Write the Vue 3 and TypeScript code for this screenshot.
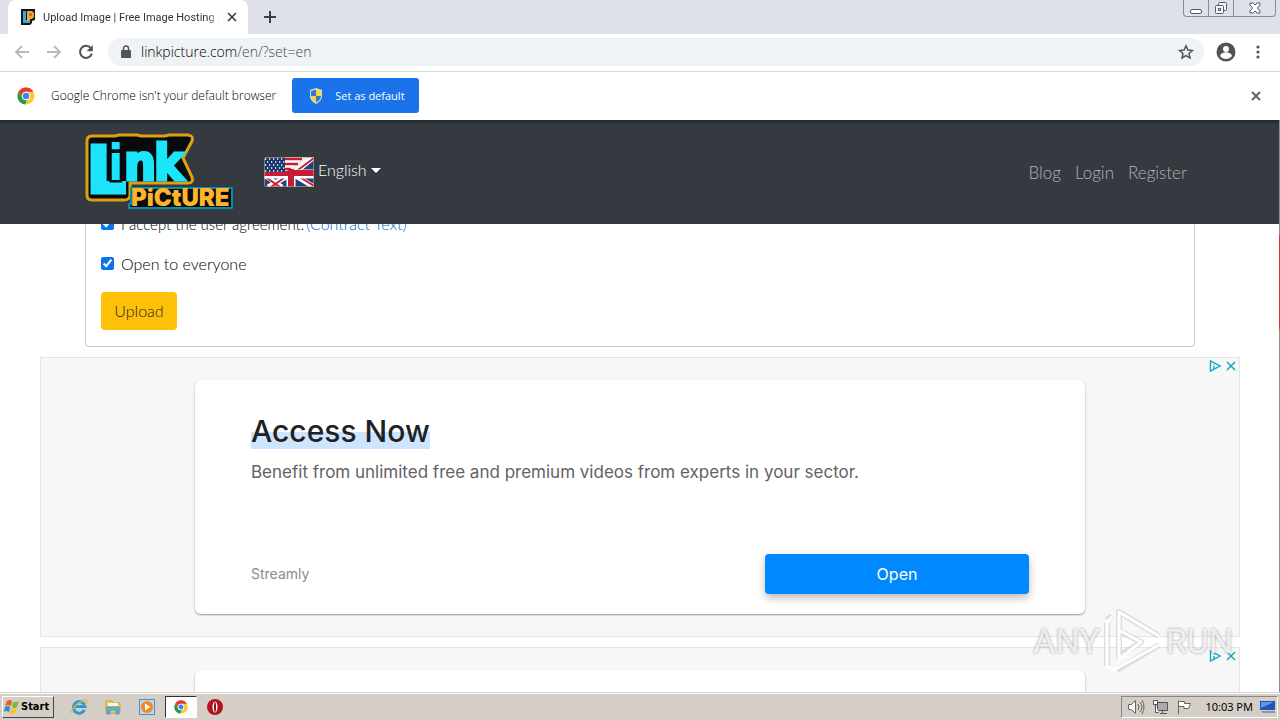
<script setup lang="ts">
import { ref } from 'vue'

interface Ad {
  title: string
  text: string
  brand: string
  action: string
}

const address = ref('linkpicture.com/en/?set=en')
const accepted = ref(true)
const open = ref(true)
const links = ['Blog', 'Login', 'Register']
const ad: Ad = {
  title: 'Access Now',
  text: 'Benefit from unlimited free and premium videos from experts in your sector.',
  brand: 'Streamly',
  action: 'Open',
}
const ads: Ad[] = [ad, ad]
</script>

<template>
  <div class="screen">
    <header class="tabs">
      <div class="tab">
        <svg class="favicon" viewBox="0 0 16 16" width="16" height="16">
          <path d="M1 0h14v11l-3 1v2l-2 2H1z" fill="#151515" />
          <path d="M3 2h3v9h4v3H3z" fill="#35a9e8" />
          <path d="M7 2h5l2 2v4l-2 2h-2v2H7z" fill="#f6a437" />
          <path d="M9.500 4.500h2v2h-2z" fill="#8b4b12" />
        </svg>
        <span class="tab-title">Upload Image | Free Image Hosting |</span>
        <button class="plain" aria-label="Close tab">
          <svg viewBox="0 0 10 10" width="10" height="10"><path d="M1 1l8 8M9 1l-8 8" stroke="#3c4043" stroke-width="1.7" /></svg>
        </button>
      </div>
      <button class="plain new-tab" aria-label="New tab">
        <svg viewBox="0 0 12 12" width="12" height="12"><path d="M6 0v12M0 6h12" stroke="#3c4043" stroke-width="2" /></svg>
      </button>
      <div class="window-buttons">
        <button aria-label="Minimize">
          <svg viewBox="0 0 14 14" width="14" height="14"><rect x="1.500" y="8.500" width="11" height="4" rx="1.500" fill="#fff" stroke="#555a66" /></svg>
        </button>
        <button aria-label="Restore">
          <svg viewBox="0 0 14 14" width="14" height="14" fill="#f4f5f7" stroke="#555a66"><rect x="4.500" y="1.500" width="8" height="8" rx="1" /><rect x="1.500" y="4.500" width="8" height="8" rx="1" /><rect x="4.500" y="7.500" width="2" height="2" /></svg>
        </button>
        <button class="wide" aria-label="Close">
          <svg viewBox="0 0 14 14" width="14" height="14"><path d="M2 2h3l2 2 2-2h3v2L9.500 7 12 10v2H9L7 10l-2 2H2v-2l2.500-3L2 4z" fill="#fff" stroke="#555a66" /></svg>
        </button>
      </div>
    </header>

    <div class="toolbar">
      <button class="plain" aria-label="Back">
        <svg viewBox="0 0 14 14" width="14" height="14" fill="none" stroke="#b6b8bb" stroke-width="1.8"><path d="M14 7H1M7 1L1 7l6 6" /></svg>
      </button>
      <button class="plain" aria-label="Forward">
        <svg viewBox="0 0 14 14" width="14" height="14" fill="none" stroke="#b6b8bb" stroke-width="1.8"><path d="M0 7h13M7 1l6 6-6 6" /></svg>
      </button>
      <button class="plain" aria-label="Reload">
        <svg viewBox="1 1 14 14" width="14" height="14"><path d="M12.800 4.200A6 6 0 1 0 13.800 9.600" fill="none" stroke="#505357" stroke-width="2" /><path d="M14.800 1v6.200H8.600z" fill="#505357" /></svg>
      </button>
      <div class="omnibox">
        <svg viewBox="0 0 10 13" width="10" height="13"><path d="M2.500 6V3.500a2.500 2.500 0 0 1 5 0V6" fill="none" stroke="#505357" stroke-width="1.500" /><rect x="0" y="5" width="10" height="8" rx="1" fill="#505357" /></svg>
        <label class="address">
          <input v-model="address" aria-label="Address" class="address-input" />
          <span class="address-text" aria-hidden="true">linkpicture.com<i>/en/?set=en</i></span>
        </label>
        <button class="plain" aria-label="Bookmark">
          <svg viewBox="0 0 16 16" width="16" height="16"><path d="M8 1.800l1.900 4.200 4.500.5-3.400 3 1 4.500L8 11.700 4 14l1-4.500-3.400-3L6.100 6z" fill="none" stroke="#505357" stroke-width="1.500" /></svg>
        </button>
      </div>
      <button class="plain" aria-label="Profile">
        <svg viewBox="0 0 20 20" width="20" height="20"><circle cx="10" cy="10" r="9.500" fill="#505357" /><circle cx="10" cy="7" r="3" fill="#fff" /><path d="M4 14c1-5 11-5 12 0-3 4-9 4-12 0z" fill="#fff" /></svg>
      </button>
      <button class="plain menu" aria-label="Menu">
        <svg viewBox="0 0 4 14" width="4" height="14" fill="#505357"><circle cx="2" cy="2" r="1.600" /><circle cx="2" cy="7" r="1.600" /><circle cx="2" cy="12" r="1.600" /></svg>
      </button>
    </div>

    <div class="infobar">
      <svg viewBox="0 0 18 18" width="18" height="18"><circle cx="9" cy="9" r="8.500" fill="#fcc934" /><path d="M1.600 4.800A8.500 8.500 0 0 1 16.400 4.800H9A4.200 4.200 0 0 0 5.300 11z" fill="#e33b2e" /><path d="M1.600 4.800L5.400 11.200A4.200 4.200 0 0 0 10 13.100L8 17.500A8.500 8.500 0 0 1 1.600 4.800z" fill="#1e9c4f" /><circle cx="9" cy="9" r="4.200" fill="#fff" /><circle cx="9" cy="9" r="3.200" fill="#3b82ee" /></svg>
      <span class="info-text">Google Chrome isn't your default browser</span>
      <button class="set-default">
        <svg viewBox="0 0 16 16" width="16" height="16"><path d="M8 0l6 2v6c0 4-3 6-6 8-3-2-6-4-6-8V2z" fill="#d7dde5" /><path d="M8 1.500L3 3v5h5z" fill="#2b7bd0" /><path d="M8 1.500L13 3v5H8z" fill="#f8d634" /><path d="M3 8h5v6.500C5 12.500 3 11 3 8z" fill="#f8d634" /><path d="M13 8H8v6.500c3-2 5-3.500 5-6.500z" fill="#2b7bd0" /></svg>
        Set as default
      </button>
      <button class="plain dismiss" aria-label="Dismiss">
        <svg viewBox="0 0 10 10" width="10" height="10"><path d="M1 1l8 8M9 1l-8 8" stroke="#5f6368" stroke-width="2" /></svg>
      </button>
    </div>

    <div class="site">
      <nav class="navbar">
        <div class="container nav-row">
          <a href="#" class="logo" aria-label="Link Picture">
            <svg viewBox="0 0 149 76" width="149" height="76">
              <path d="M7 2H30L34 1H52L56 2H80L84 1H103Q109 2 107 7L98 24L107 43Q109 49 103 49H45V62Q44 66 39 66H7Q2 66 2 61V7Q2 2 7 2z" fill="#080b0d" stroke="#e0a013" stroke-width="3" />
              <path d="M46 54H147V74H44V70H46z" fill="#080b0d" stroke="#078cad" stroke-width="2" stroke-linejoin="round" />
              <g fill="#1ce4fb" stroke="#1ce4fb">
                <text x="4" y="59" class="logo-l" stroke-width="3">L</text>
                <text x="23" y="46" class="logo-ink" stroke="#080b0d" stroke-width="5">i</text>
                <text x="39" y="46" class="logo-ink" stroke-width="3">n</text>
                <text x="69" y="46" class="logo-ink" stroke-width="3">k</text>
              </g>
              <text x="46" y="72" class="logo-picture" fill="#ffb52b">PiCtURE</text>
            </svg>
          </a>
          <button class="language">
            <svg class="flag" viewBox="0 0 50 30" width="50" height="30">
              <rect width="50" height="30" fill="#f3eeee" />
              <path d="M0 17h50v13H0z" fill="#20427e" />
              <path d="M33 12L50 0v30H33z" fill="#203f7e" />
              <path d="M0 18l18 12M50 30L32 19M50 0L28 18M22 20L4 30" stroke="#fff" stroke-width="5" />
              <path d="M0 19l16 11M50 29L34 19M50 1L30 16M20 21L7 30" stroke="#c81f3b" stroke-width="2" />
              <path d="M0 17h50M27 12v18" stroke="#fff" stroke-width="9" />
              <path d="M0 16h50M27 12v18" stroke="#c51c38" stroke-width="6" />
              <path d="M20 0h20L23 14h-3z" fill="#fff" />
              <path d="M20 2h18M20 7h14M20 12h7" stroke="#c51c38" stroke-width="2.500" />
              <rect width="21" height="15" fill="#17346f" />
              <path d="M1 2h20M3 5h18M1 8h20M3 11h18M1 14h20" stroke="#fff" stroke-width="1.300" stroke-dasharray="1.300 2.700" />
              <rect x=".5" y=".5" width="49" height="29" rx="1" fill="none" stroke="#b6a16c" stroke-width=".7" />
            </svg>
            <span class="language-name">English<span class="caret"></span></span>
          </button>
          <div class="nav-links"><a v-for="link in links" :key="link" href="#">{{ link }}</a></div>
        </div>
      </nav>

      <main class="content">
        <form class="container upload" @submit.prevent>
          <div class="check">
            <input id="accept" v-model="accepted" type="checkbox" />
            <label for="accept" class="long">I accept the user agreement.</label><a href="#">(Contract Text)</a>
          </div>
          <div class="check">
            <input id="public" v-model="open" type="checkbox" />
            <label for="public">Open to everyone</label>
          </div>
          <button class="submit">Upload</button>
        </form>

        <section v-for="(item, i) in ads" :key="i" class="ad">
          <div class="ad-marks">
            <svg viewBox="0 0 12 12" width="12" height="12" fill="none" stroke="#16a6bd" stroke-width="1.400"><path d="M1.500 1v10L11 6z" /><path d="M5 4v.8M5 6v3" /></svg>
            <button class="plain" aria-label="Close ad"><svg viewBox="0 0 10 10" width="10" height="10"><path d="M1 1l8 8M9 1l-8 8" stroke="#16a6bd" stroke-width="1.500" /></svg></button>
          </div>
          <article class="ad-card">
            <h2><span>{{ item.title }}</span></h2>
            <p>{{ item.text }}</p>
            <footer><span>{{ item.brand }}</span><button>{{ item.action }}</button></footer>
          </article>
        </section>
      </main>
      <div class="edge"><span></span></div>
      <div class="watermark">
        <span>ANY</span>
        <svg viewBox="0 0 58 64" width="58" height="64" fill="none" stroke-linejoin="round">
          <g stroke="#c4c4c4" stroke-width="6" opacity=".5"><path d="M15 38V3L55 27M3 14V57M8 7L3 11M13 61l42-25M15 50V22l22 11-22 14" /></g>
          <g stroke="#fff" stroke-width="3"><path d="M15 38V3L55 27M3 57V13l5-5M3 57l7 4L55 36M15 50V21L37 33z" /></g>
        </svg>
        <span>RUN</span>
      </div>
    </div>

    <footer class="taskbar">
      <button class="start">
        <svg viewBox="0 0 16 16" width="16" height="16"><path d="M3 2q3-2 5 0L7 7Q4 5 1 7z" fill="#ee5b25" /><path d="M9 3q3 1 6-1l-2 6q-3 2-5 0z" fill="#7eb82b" /><path d="M1 8q3-2 5 0l-1 5q-3-2-5 0z" fill="#2e87d1" /><path d="M7 9q3 1 6 0l-2 5q-3 2-5 0z" fill="#fbc224" /></svg>
        Start
      </button>
      <div class="quick">
        <button aria-label="Internet Explorer"><svg viewBox="0 0 18 18" width="18" height="18" fill="none"><path d="M14.500 12A5.800 5.800 0 1 1 15 8.500H5" stroke="#2c9bdc" stroke-width="3" /><path d="M2 15C-1 12 12 1 16 2c2 1 0 4-1 5" stroke="#e6b52d" stroke-width="1.300" /></svg></button>
        <button aria-label="Explorer"><svg viewBox="0 0 18 18" width="18" height="18"><path d="M2 3h6l1 2h7v10H2z" fill="#edcc67" stroke="#c9a346" /><path d="M4 5h10v3H4z" fill="#fff5cb" /><path d="M3 16V9h12v7h-3v-4H6v4z" fill="#5bb9dc" stroke="#3289b6" stroke-width=".7" /></svg></button>
        <button aria-label="Media Player"><svg viewBox="0 0 18 18" width="18" height="18"><rect x="1.500" y="1.500" width="15" height="15" fill="#b7d8f0" stroke="#508fc5" /><circle cx="9" cy="9" r="6" fill="#f5861b" /><path d="M7 5.500v7L12.500 9z" fill="#fff" /></svg></button>
        <button class="current" aria-label="Chrome"><svg viewBox="0 0 18 18" width="14" height="14"><circle cx="9" cy="9" r="8.500" fill="#fcc934" /><path d="M1.600 4.800A8.500 8.500 0 0 1 16.400 4.800H9A4.200 4.200 0 0 0 5.300 11z" fill="#e33b2e" /><path d="M1.600 4.800L5.400 11.200A4.200 4.200 0 0 0 10 13.100L8 17.500A8.500 8.500 0 0 1 1.600 4.800z" fill="#1e9c4f" /><circle cx="9" cy="9" r="4.200" fill="#fff" /><circle cx="9" cy="9" r="3.200" fill="#3b82ee" /></svg></button>
        <button aria-label="Opera"><svg viewBox="0 0 18 18" width="18" height="18"><circle cx="9" cy="9" r="8" fill="#b5121d" /><ellipse cx="9" cy="9" rx="2.500" ry="5.500" fill="#fff" /><ellipse cx="9" cy="9" rx="1" ry="5" fill="#8c0d16" /></svg></button>
      </div>
      <div class="tray">
        <svg viewBox="0 0 18 16" width="18" height="16" fill="#fff" stroke="#666"><path d="M1.500 5.500h3l4-4v13l-4-4h-3z" /><path d="M11 5q2 3 0 6M13 3q4 5 0 10M15 1q4 7 0 14" fill="none" /></svg>
        <svg viewBox="0 0 17 16" width="17" height="16" fill="#fff" stroke="#555"><path d="M5.500 3.500h10v8h-10z" fill="#aaa" /><path d="M8 14.500h7M10.500 12v2M1.500 1.500h4v4h-4zM3.500 5.500v8h3" /></svg>
        <svg viewBox="0 0 17 16" width="17" height="16" fill="#fff" stroke="#666"><path d="M2.500 15V1.500M2.500 2.500h6v2h6l-2 5H8v-2H2.500" /></svg>
        <time>10:03 PM</time>
        <svg viewBox="0 0 16 14" width="16" height="14"><path d="M0 1h15v9H0z" fill="#1e55b7" /><path d="M1 2h13L1 8z" fill="#5d9ae6" /><path d="M1 11h14v2H3z" fill="#8797ab" /></svg>
      </div>
    </footer>
  </div>
</template>

<style>
body { margin: 0; overflow: hidden; }
</style>

<style scoped>
* { box-sizing: border-box; }
.screen { height: 100vh; display: flex; flex-direction: column; overflow: hidden; background: #fff; font-family: "Noto Sans", sans-serif; color: #212529; }
svg { display: block; flex: none; overflow: visible; }
button { font: inherit; cursor: pointer; }
a { text-decoration: none; }
.plain { border: 0; padding: 0; background: none; display: flex; flex: none; }
.tabs { height: 34px; background: #dee1e8; display: flex; align-items: center; flex: none; }
.tab { align-self: stretch; width: 240px; margin-left: 8px; padding: 0 11px 0 12px; display: flex; align-items: center; background: #fff; border-radius: 8px 8px 0 0; }
.tab-title { flex: 1; min-width: 0; margin: 0 8px 0 7px; font: 11px Roboto, sans-serif; white-space: nowrap; overflow: hidden; color: #333; mask-image: linear-gradient(to right, #000 94%, transparent); }
.new-tab { margin-left: 16px; }
.window-buttons { margin: 0 4px 0 auto; align-self: flex-start; display: flex; height: 17px; border: 1px solid #868b96; border-top: 0; border-radius: 0 0 4px 4px; }
.window-buttons button { width: 25px; padding: 0; border: 0; border-right: 1px solid #868b96; background: none; display: flex; align-items: center; justify-content: center; }
.window-buttons .wide { width: 41px; border-right: 0; }
.toolbar { height: 38px; flex: none; display: flex; align-items: center; gap: 18px; padding: 0 16px 2px 15px; border-bottom: 1px solid #d8d9db; }
.omnibox { flex: 1; height: 28px; margin: 0 -6px 0 -3px; padding: 0 10px 0 13px; border-radius: 14px; background: #f0f3f6; display: flex; align-items: center; gap: 10px; }
.address { flex: 1; display: grid; font: 14px/20px "Open Sans", sans-serif; }
.address > * { grid-area: 1 / 1; }
.address-input { border: 0; padding: 0; background: none; font: inherit; color: transparent; outline: 0; min-width: 0; }
.address-text { pointer-events: none; color: #000; font: 300 14px/20px "Open Sans", sans-serif; }
.address-text i { font-style: normal; color: #45484c; }
.menu { padding: 0 4px 0 2px; }
.infobar { height: 48px; flex: none; display: flex; align-items: center; padding: 0 19px 1px 17px; }
.info-text { margin: 0 16px 0 16px; font: 300 12px/18px "Open Sans", sans-serif; color: #000; white-space: nowrap; }
.set-default { width: 127px; height: 35px; display: flex; align-items: center; gap: 11px; padding: 0 16px; border: 0; border-radius: 3px; background: #1a73e8; color: #fff; font: 11px "Open Sans", sans-serif; white-space: nowrap; }
.dismiss { margin-left: auto; }
.site { position: relative; flex: 1; min-height: 0; display: flex; flex-direction: column; font-family: Lato, sans-serif; font-weight: 300; font-size: 16px; line-height: 24px; color: #000; }
.container { width: calc(100% - 32px); max-width: 1110px; margin-left: auto; margin-right: auto; }
.navbar { flex: none; height: 104px; background: linear-gradient(#23272b, #343a40 4px); position: relative; z-index: 1; }
.nav-row { display: flex; align-items: center; height: 100%; }
.logo-l { font: 900 66px/1 Inter, sans-serif; }
.logo-ink { font: 900 50px/1 "DejaVu Sans Condensed", "DejaVu Sans", sans-serif; paint-order: stroke; }
.logo-picture { font: 900 24px/1 Inter, sans-serif; }
.language { margin-left: 30px; padding: 0; border: 0; background: none; display: flex; align-items: center; gap: 4px; color: #fff; }
.flag { overflow: hidden; }
.language-name { display: flex; align-items: center; gap: 4px; line-height: 26px; align-self: flex-start; }
.caret { border: 5px solid transparent; border-top-color: #fff; border-bottom: 0; }
.nav-links { margin-left: auto; display: flex; gap: 14px; padding: 2px 8px 0 0; font-size: 17px; }
.nav-links a { color: #b0b3b6; }
.content { flex: 1; min-height: 0; overflow: hidden; }
.upload { margin-top: -28px; padding: 16px 15px; border: solid #c8cacc; border-width: 0 1px 1px; border-radius: 4px; }
.check { display: flex; align-items: center; margin-bottom: 16px; }
.check input { width: 13px; height: 13px; margin: 0 7px 1px 0; accent-color: #0875e8; }
.check .long { font-size: 15px; }
.check a { color: #0068d0; margin-left: 2px; }
.submit { display: block; height: 38px; min-width: 76px; padding: 0 13px; border: 0; border-radius: 4px; background: #ffc107; color: #212529; }
.ad { width: calc(100% - 80px); max-width: 1200px; height: 280px; margin: 10px auto 0; border: 1px solid #e5e5e5; background: #f7f7f7; padding-top: 22px; position: relative; font-family: Inter, sans-serif; }
.ad-marks { position: absolute; top: 2px; right: 3px; display: flex; align-items: center; gap: 5px; }
.ad-card { width: calc(100% - 40px); max-width: 890px; height: 234px; margin: auto; padding: 32px 56px 20px; display: flex; flex-direction: column; background: #fff; border-radius: 6px; box-shadow: 0 1px 2px #0006; font-weight: 400; }
.ad-card h2 { margin: 0; font: 500 30px/38px Inter, sans-serif; color: #202124; }
.ad-card h2 span { background: linear-gradient(transparent 52%, #cfe5fd 52%); }
.ad-card p { margin: 10px 0 0; font-size: 17px; color: #616365; }
.ad-card footer { margin-top: auto; display: flex; align-items: center; justify-content: space-between; font-size: 14px; color: #8a8c8e; }
.ad-card footer button { width: 264px; height: 40px; border: 0; border-radius: 4px; background: #0088ff; color: #fff; font-size: 16px; box-shadow: 0 4px 8px #0004; }
.edge { position: absolute; z-index: 2; right: 0; top: 0; bottom: 0; width: 1px; padding-top: 115px; background: #8b8d90; }
.edge span { display: block; height: 94px; background: #e03222; }
.watermark { position: absolute; z-index: 3; right: 47px; bottom: 19px; display: flex; align-items: center; gap: 4px; pointer-events: none; font: 400 34px/64px "Liberation Sans Narrow", Roboto, sans-serif; color: #fffc; text-shadow: 0 0 3px #999; }
.taskbar { flex: none; height: 28px; display: flex; align-items: center; border-top: 1px solid #d4d0c8; box-shadow: inset 0 1px #fff; background: #d4cec6; position: relative; z-index: 4; padding: 2px; }
.start { height: 22px; width: 52px; padding: 0 1px; display: flex; align-items: center; gap: 1px; border: 1px solid; border-color: #fff #444 #444 #fff; background: #d4cec6; font: 700 11px "DejaVu Sans Condensed", sans-serif; color: #000; }
.quick { display: flex; align-items: center; margin-left: 8px; }
.quick button { width: 34px; height: 22px; padding: 0; border: 0; background: none; display: flex; align-items: center; justify-content: center; }
.quick .current { width: 32px; margin: 0 1px; border: 1px solid; border-color: #333 #fff #fff #333; background: #fff; }
.tray { margin-left: auto; height: 22px; border: 1px solid; border-color: #888 #fff #fff #888; padding: 0 1px 0 5px; display: flex; align-items: center; gap: 7px; font-size: 11px; color: #000; }
.tray time { margin-left: 5px; white-space: nowrap; }
</style>
